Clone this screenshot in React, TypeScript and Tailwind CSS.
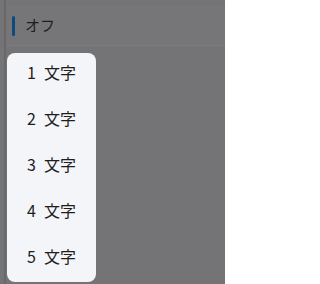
const font = "font-['Noto_Sans_CJK_JP','Noto_Sans',sans-serif]"

const options = [1, 2, 3, 4, 5]

export default function App() {
  return (
    <div className={`relative h-[284px] w-[225px] overflow-hidden bg-[#747476] ${font}`}>
      <div className="ml-[4px] h-full border-l-2 border-[#68686a] pt-[6px]">
        {/* selected row */}
        <div className="flex h-[40px] items-center border-b border-[#7c7c7e] bg-[#767678] pl-[6px]">
          <span className="h-[20px] w-[3px] rounded-full bg-[#0f4a7e]" />
          <span className="ml-[10px] text-[15px] text-[#1e1e1e]">オフ</span>
        </div>
      </div>

      {/* dropdown */}
      <div className="absolute left-[7px] top-[53px] flex w-[89px] flex-col gap-[8px] rounded-[8px] bg-[#f4f5f9] pb-[7px]">
        {options.map((n) => (
          <div key={n} className="flex h-[38px] items-center gap-[8px] pl-[20px] text-[16px] text-[#1e1e1e]">
            <span>{n}</span>
            <span>文字</span>
          </div>
        ))}
      </div>
    </div>
  )
}
